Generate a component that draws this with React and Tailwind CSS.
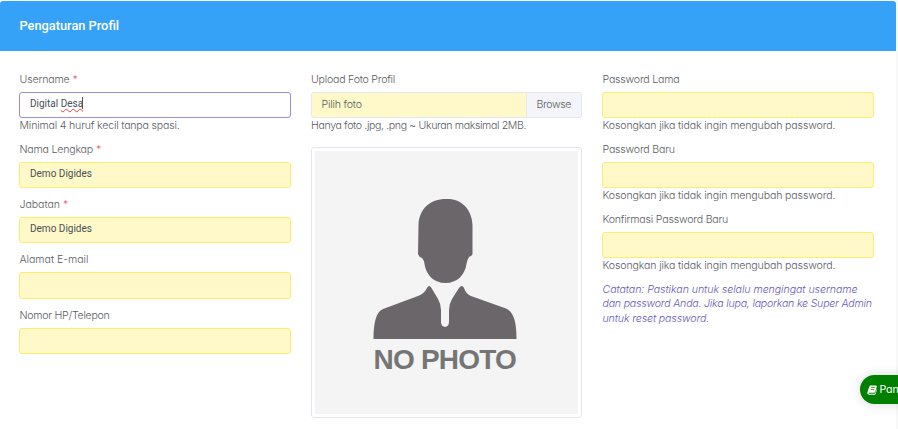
const Label = ({ children, required, tracking }) => (
  <label className="block h-[15px] mb-[5px] pl-[0.500px] leading-[15px] whitespace-nowrap">
    <span className={tracking || "tracking-[-0.2px]"}>{children}</span>
    {required && <span className="text-[#f64e60]"> *</span>}
  </label>
);

const Help = ({ children, tracking }) => (
  <div className="h-[14.6px] whitespace-nowrap pl-[0.500px] pt-px leading-[14.6px]">
    <span className={tracking}>{children}</span>
  </div>
);

const Field = ({ label, required, value, help, focused, tracking, helpTracking = "tracking-[-0.14px]" }) => (
  <div className="mb-[9px]">
    <Label required={required} tracking={tracking}>{label}</Label>
    <div
      className={
        focused
          ? "flex h-[26.3px] items-center rounded-[3px] border border-[#9a90d8] bg-white px-[10px]"
          : "flex h-[26.3px] items-center rounded-[3px] border border-[#ffec6e] bg-[#fff8c8] px-[10px]"
      }
    >
      <span className="pb-[2px] font-['Roboto',sans-serif] text-[10px] font-normal leading-[14px] text-[#495057] [font-feature-settings:normal]">
        {value}
      </span>
    </div>
    {help && <Help tracking={helpTracking}>{help}</Help>}
  </div>
);

const Silhouette = () => (
  <svg className="block h-[142px] w-[146px]" viewBox="0 0 146 142" fill="#6b666a">
    <path d="M74 1C58 1 47 11 46.500 27L46 56Q47 59 50 60Q52 62 52.500 66C54 77 62 85 73.500 85C85 85 93 77 94.500 66Q95 62 97 59Q100 58 100.500 56V27C100 11 89 1 76 1Z" />
    <path d="M1.500 141C1.500 125 4 114 11 111L46 98Q52 96 55 90Q57 86 59.500 90L66 101Q69 106 69 112V124C69 130.500 77 130.500 77 124V112Q77 106 80 101L87 90Q90 86 92 90Q94 96 99 98L134 110.500C142 114 144.500 125 144.500 141Z" />
  </svg>
);

const Book = () => (
  <svg className="h-[10px] w-[10px] shrink-0" viewBox="0 0 20 20" fill="white">
    <path fillRule="evenodd" d="M7.500 1H18Q20 1.500 19.500 3.500L16.500 14Q16 15.500 14.500 15.500H4Q2.500 15.500 3 16.700Q3.300 17.300 4.500 17.300H15Q16.500 17.300 17 16L19 8Q20 9 19.500 10.500L17.500 17.500Q17 19.300 15 19.300H4Q1.500 19.300.7 17Q.3 15.500 1 14L4.500 3.500Q5.300 1 7.500 1ZM8.500 4.500L8.100 6H15.200L15.600 4.500ZM7.600 8L7.200 9.500H14.200L14.600 8Z" />
  </svg>
);

export default function App() {
  return (
    <div className="relative h-[429px] w-[898px] overflow-hidden bg-[#f8f8f9] pt-px font-['Inter','Liberation_Sans',sans-serif] text-[10.6px] font-light text-[#595d62] [font-feature-settings:'cv11']">
      <div className="h-full w-[895.500px] bg-white">
        <header className="flex h-[50px] items-center rounded-t-[3px] bg-[#36a2f7] pl-[19.500px]">
          <h1 className="font-['Roboto',sans-serif] text-[12.8px] font-medium text-white">Pengaturan Profil</h1>
        </header>
        <main className="grid grid-cols-3 gap-[20px] pl-[19px] pr-[22px] pt-[21px]">
          <section>
            <Field
              label="Username"
              required
              focused
              tracking="tracking-[-0.15px]"
              value={
                <>
                  Digital{" "}
                  <span className="underline decoration-[#e8424b] decoration-wavy decoration-[0.5px] underline-offset-1">Desa</span>
                  <span className="-ml-px inline-block h-[12px] w-px bg-[#555] align-[-2px]" />
                </>
              }
              help="Minimal 4 huruf kecil tanpa spasi."
              helpTracking="tracking-[-0.19px]"
            />
            <Field label="Nama Lengkap" required value="Demo Digides" />
            <Field label="Jabatan" required value="Demo Digides" tracking="tracking-[-0.05px]" />
            <Field label="Alamat E-mail" tracking="tracking-[-0.04px]" />
            <Field label="Nomor HP/Telepon" tracking="tracking-[-0.27px]" />
          </section>
          <section>
            <Label tracking="tracking-[-0.23px]">Upload Foto Profil</Label>
            <div className="flex h-[26.3px] overflow-hidden rounded-[3px] border border-[#e6e7ef] bg-[#fff8c8]">
              <div className="flex flex-1 items-center pl-[10px] tracking-[-0.2px]">Pilih foto</div>
              <div className="flex w-[55.500px] items-center justify-center border-l border-[#e6e7ef] bg-[#f3f5fa] tracking-[-0.4px]">Browse</div>
            </div>
            <Help tracking="tracking-[-0.37px]">Hanya foto .jpg, .png ~ Ukuran maksimal 2MB.</Help>
            <div className="mt-[14px] h-[271.500px] rounded-[3px] border border-[#e4e6ef] bg-white p-[3px]">
              <div className="flex h-full flex-col items-center bg-[#f4f4f4] pr-[3px] pt-[47px]">
                <Silhouette />
                <div className="mt-[4px] whitespace-nowrap font-['Liberation_Sans',sans-serif] text-[28px] font-bold leading-[32px] tracking-[-0.8px] text-[#757575]">
                  NO PHOTO
                </div>
              </div>
            </div>
          </section>
          <section>
            <Field label="Password Lama" help="Kosongkan jika tidak ingin mengubah password." />
            <Field label="Password Baru" help="Kosongkan jika tidak ingin mengubah password." />
            <Field label="Konfirmasi Password Baru" help="Kosongkan jika tidak ingin mengubah password." />
            <p className="whitespace-nowrap pl-[0.500px] pt-px italic leading-[14.6px] text-[#6759bd]">
              <span className="block tracking-[-0.06px]">Catatan: Pastikan untuk selalu mengingat username</span>
              <span className="block tracking-[-0.21px]">dan password Anda. Jika lupa, laporkan ke Super Admin</span>
              <span className="block tracking-[-0.12px]">untuk reset password.</span>
            </p>
          </section>
        </main>
      </div>
      <button className="absolute left-[860px] top-[375px] flex h-[29px] w-[80px] items-center gap-[3px] rounded-full bg-[#008000] pl-[6.500px] font-normal text-white shadow-[0_0_12px_rgba(0,0,0,0.15)]">
        <Book />
        <span className="tracking-[-0.1px]">Pan</span>
      </button>
    </div>
  );
}
